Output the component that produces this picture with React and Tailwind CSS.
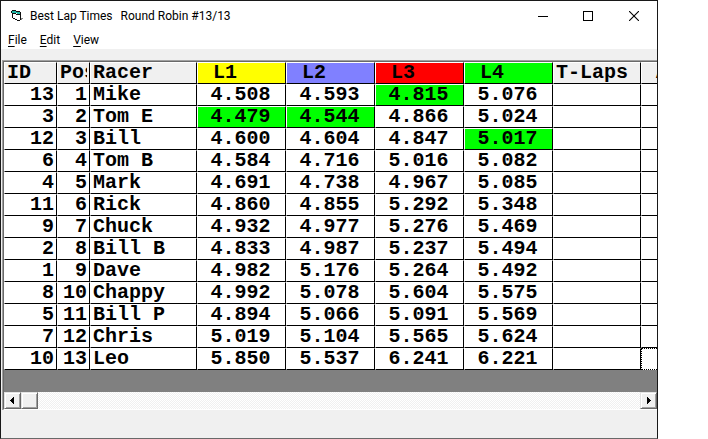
const racers = [
  [13, 'Mike', '4.508', '4.593', '4.815', '5.076'],
  [3, 'Tom E', '4.479', '4.544', '4.866', '5.024'],
  [12, 'Bill', '4.600', '4.604', '4.847', '5.017'],
  [6, 'Tom B', '4.584', '4.716', '5.016', '5.082'],
  [4, 'Mark', '4.691', '4.738', '4.967', '5.085'],
  [11, 'Rick', '4.860', '4.855', '5.292', '5.348'],
  [9, 'Chuck', '4.932', '4.977', '5.276', '5.469'],
  [2, 'Bill B', '4.833', '4.987', '5.237', '5.494'],
  [1, 'Dave', '4.982', '5.176', '5.264', '5.492'],
  [8, 'Chappy', '4.992', '5.078', '5.604', '5.575'],
  [5, 'Bill P', '4.894', '5.066', '5.091', '5.569'],
  [7, 'Chris', '5.019', '5.104', '5.565', '5.624'],
  [10, 'Leo', '5.850', '5.537', '6.241', '6.221'],
];

const bestTimes = ['4.479', '4.544', '4.815', '5.017'];

const lanes = [
  ['L1', 'bg-[#ffff00]'],
  ['L2', 'bg-[#8080ff]'],
  ['L3', 'bg-[#ff0000]'],
  ['L4', 'bg-[#00ff00]'],
];

const cell =
  'h-[22px] overflow-hidden whitespace-nowrap border border-t-white border-l-white border-r-black border-b-black p-0 leading-5';

function Cell({ as: Tag = 'td', className = '', children, ...rest }) {
  return (
    <Tag className={`${cell} ${className}`} {...rest}>
      {children}
    </Tag>
  );
}

function AppIcon() {
  return (
    <svg className="h-3 w-[13px]" viewBox="0 0 13 12" shapeRendering="crispEdges" aria-hidden="true">
      <path d="M1 1h4v1h5v8H6V9H3V8H1z" fill="#fff" />
      <path d="M1 1h4v1h4v1h1v1H6V3H1z" fill="#20b5a5" />
      <path d="M0 1h1v2H0zM1 0h4v1H1zM5 1h4v1H5zM9 2h1v8H9zM1 3h1v5H1zM2 3h3v1H2zM5 4h4v1H5zM2 8h2v1H2zM4 9h2v1H4zM6 10h3v1H6z" fill="#111" />
      <path d="M10 8h1v2h-1zM11 8h1v1h-1z" fill="#888" />
    </svg>
  );
}

function TitleBar() {
  return (
    <header className="flex h-[29px] items-center bg-white pl-[10px]">
      <AppIcon />
      <h1 className="ml-[6px] flex gap-2 whitespace-nowrap text-[12px] leading-4">
        <span>Best Lap Times</span>
        <span>Round Robin #13/13</span>
      </h1>
      <div className="ml-auto flex h-full">
        <button aria-label="Minimize" className="flex w-[44px] items-center justify-center">
          <svg width="10" height="10" viewBox="0 0 10 10" shapeRendering="crispEdges"><path d="M0 5h10v1H0z" /></svg>
        </button>
        <button aria-label="Maximize" className="flex w-[46px] items-center justify-center">
          <svg width="10" height="10" viewBox="0 0 10 10" shapeRendering="crispEdges"><path d="M0 0h10v10H0zM1 1v8h8V1z" fillRule="evenodd" /></svg>
        </button>
        <button aria-label="Close" className="flex w-[46px] items-center justify-center">
          <svg width="10" height="10" viewBox="0 0 10 10"><path d="M0 0l10 10M10 0L0 10" stroke="#000" strokeWidth="1.1" /></svg>
        </button>
      </div>
    </header>
  );
}

function MenuBar() {
  return (
    <nav className="flex h-[19px] items-center gap-[13px] bg-white pl-[7px] text-[12px] leading-4">
      {['File', 'Edit', 'View'].map((name) => (
        <button key={name}>
          <span className="underline underline-offset-2">{name[0]}</span>
          {name.slice(1)}
        </button>
      ))}
    </nav>
  );
}

function LapTable() {
  return (
    <table className="w-[725px] table-fixed border-separate border-spacing-0 bg-white font-['Liberation_Mono',monospace] text-[20px] font-bold">
      <colgroup>
        <col className="w-[53px]" />
        <col className="w-[33px]" />
        <col className="w-[107px]" />
        <col className="w-[89px]" />
        <col className="w-[89px]" />
        <col className="w-[89px]" />
        <col className="w-[89px]" />
        <col className="w-[88px]" />
        <col className="w-[88px]" />
      </colgroup>
      <thead>
        <tr className="text-left">
          <Cell as="th" scope="col" className="bg-[#f0f0f0] pl-[2px]">ID</Cell>
          <Cell as="th" scope="col" className="bg-[#f0f0f0] px-[2px]">
            <div className="overflow-hidden">Pos</div>
          </Cell>
          <Cell as="th" scope="col" className="bg-[#f0f0f0] pl-[2px]">Racer</Cell>
          {lanes.map(([name, color]) => (
            <Cell as="th" scope="col" key={name} className={`pl-[15px] ${color}`}>{name}</Cell>
          ))}
          <Cell as="th" scope="col" className="bg-[#f0f0f0] pl-[2px]">T-Laps</Cell>
          <Cell as="th" scope="col" className="bg-[#f0f0f0] pl-[14px]">Avg</Cell>
        </tr>
      </thead>
      <tbody>
        {racers.map(([id, name, ...times], row) => (
          <tr key={id}>
            <Cell className="pr-[2px] text-right">{id}</Cell>
            <Cell className="pr-[2px] text-right">{row + 1}</Cell>
            <Cell className="pl-[2px]">{name}</Cell>
            {times.map((time, lane) => (
              <Cell key={lane} className={`pr-[2px] text-center ${time === bestTimes[lane] ? 'bg-[#00ff00]' : ''}`}>
                {time}
              </Cell>
            ))}
            <Cell />
            {row === racers.length - 1 ? (
              <td className="h-[22px] border border-dotted border-black p-0" />
            ) : (
              <Cell />
            )}
          </tr>
        ))}
      </tbody>
    </table>
  );
}

const raised =
  'flex h-[17px] w-[17px] shrink-0 items-center justify-center border border-t-[#e3e3e3] border-l-[#e3e3e3] border-r-[#696969] border-b-[#696969] bg-[#f0f0f0] shadow-[inset_1px_1px_#fff,inset_-1px_-1px_#a0a0a0]';

function ScrollBar() {
  return (
    <div className="flex h-[17px] bg-[repeating-conic-gradient(#f0f0f0_0_25%,#ffffff_0_50%)] bg-[length:2px_2px]">
      <button aria-label="Scroll left" className={`pr-[2px] ${raised}`}>
        <svg width="4" height="7" viewBox="0 0 4 7" shapeRendering="crispEdges"><path d="M4 0v7L0 3.5z" /></svg>
      </button>
      <div className={raised} />
      <button aria-label="Scroll right" className={`ml-auto ${raised}`}>
        <svg width="4" height="7" viewBox="0 0 4 7" shapeRendering="crispEdges"><path d="M0 0v7l4-3.5z" /></svg>
      </button>
    </div>
  );
}

export default function App() {
  return (
    <div className="bg-white pr-[50px] font-[Roboto,sans-serif] text-black">
      <div className="border border-[#181818] border-b-[#696969] bg-[#f0f0f0]">
        <TitleBar />
        <MenuBar />
        <main className="pt-[11px] pb-7 pl-px">
          <div className="border-t border-l border-[#a0a0a0]">
            <div className="overflow-hidden border-t border-l border-[#696969] border-b border-b-white">
              <div className="overflow-hidden bg-[#808080] pb-[22px]">
                <LapTable />
              </div>
              <ScrollBar />
            </div>
          </div>
        </main>
      </div>
    </div>
  );
}
